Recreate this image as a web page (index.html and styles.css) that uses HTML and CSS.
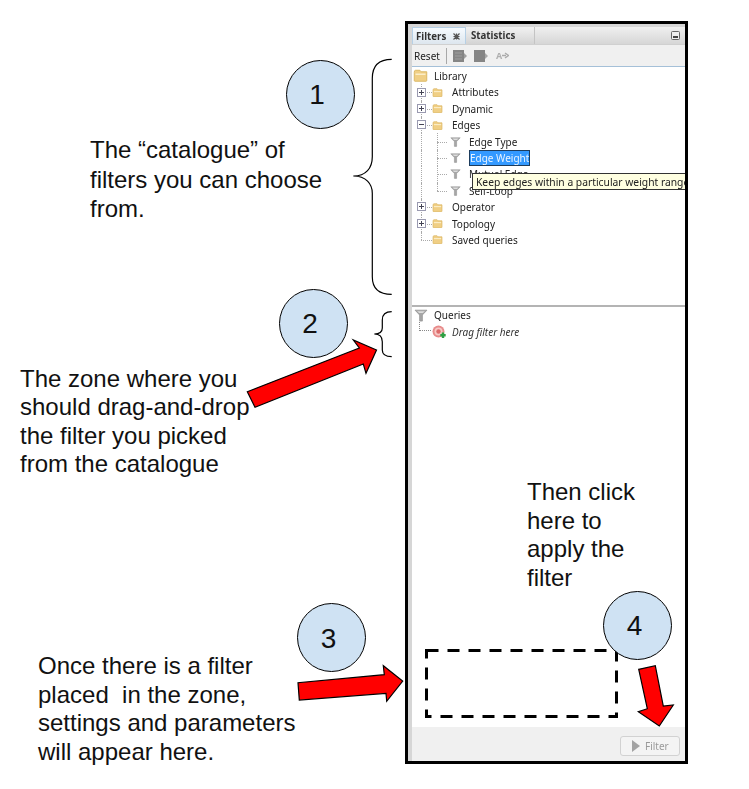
FILE: index.html
```html
<!DOCTYPE html>
<html lang="en">
<head>
<meta charset="utf-8">
<title>Filters panel</title>
<link rel="stylesheet" href="styles.css">
</head>
<body>
<svg class="defs" width="0" height="0" aria-hidden="true">
  <symbol id="folder" viewBox="0 0 12 10">
    <path d="M1 2.5 L1 9 Q1 9.6 1.6 9.6 L10.4 9.6 Q11 9.6 11 9 L11 2 L6.5 2 L5.5 .8 L2 .8 Q1 .8 1 2.5Z" fill="#f0cf85" stroke="#d8b35c" stroke-width=".7"/>
    <rect x="2" y="3.4" width="8" height="1.2" fill="#fbeec8"/>
  </symbol>
  <symbol id="funnel" viewBox="0 0 11 10">
    <path d="M.8 .8 H10.2 L6.6 4.6 V9.4 H4.4 V4.6Z" fill="#a6a6a6" stroke="#8c8c8c" stroke-width=".5"/>
    <path d="M2.5 1.6 H8.5 L7 3 H4Z" fill="#dcdcdc"/>
  </symbol>
</svg>
<main class="canvas">
  <section class="panel">
    <div class="panel-inner">
      <div class="tabs">
        <div class="tab tab-active">Filters
          <svg class="tab-close" width="7" height="7" viewBox="0 0 7 7"><path d="M.5 .5 L6.5 6.5 M6.5 .5 L.5 6.5 M.5 3.5 H6.5 M3.5 .5 V6.5" stroke="#555" stroke-width="1.2"/></svg>
        </div>
        <div class="tab">Statistics</div>
        <div class="tab-fill">
          <svg width="9" height="9" viewBox="0 0 9 9"><rect x=".5" y=".5" width="8" height="8" rx="1" fill="#eee" stroke="#666"/><rect x="2" y="5" width="5" height="2" fill="#444"/></svg>
        </div>
      </div>
      <div class="toolbar">
        <span class="reset">Reset</span>
        <span class="tool-sep"></span>
        <svg width="14" height="12" viewBox="0 0 14 12"><rect x="0" y="0" width="11" height="12" fill="#858585"/><path d="M11 3 L14 6 L11 9Z" fill="#a0a0a0"/><path d="M2 3 H9 M2 6 H9 M2 9 H9" stroke="#9e9e9e"/></svg>
        <svg class="tool-second" width="14" height="12" viewBox="0 0 14 12"><rect x="0" y="0" width="11" height="12" fill="#858585"/><path d="M11 3 L14 6 L11 9Z" fill="#a8a8a8"/></svg>
        <span class="tool-aa">A<svg width="7" height="7" viewBox="0 0 7 7"><path d="M0 3.5 H4 M3 1 L6.5 3.5 L3 6" stroke="#aaa" stroke-width="1.4" fill="none"/></svg></span>
      </div>
      <div class="tree">
        <div class="row row-root"><svg class="ic-root"><use href="#folder"/></svg><span>Library</span></div>
        <div class="row"><span class="stem"><i class="exp plus"></i></span><svg class="ic-folder"><use href="#folder"/></svg><span>Attributes</span></div>
        <div class="row"><span class="stem"><i class="exp plus"></i></span><svg class="ic-folder"><use href="#folder"/></svg><span>Dynamic</span></div>
        <div class="row"><span class="stem"><i class="exp"></i></span><svg class="ic-folder"><use href="#folder"/></svg><span>Edges</span></div>
        <div class="row"><span class="guide"></span><span class="stem2"></span><svg class="ic-funnel"><use href="#funnel"/></svg><span>Edge Type</span></div>
        <div class="row"><span class="guide"></span><span class="stem2"></span><svg class="ic-funnel"><use href="#funnel"/></svg><span class="selected">Edge Weight</span></div>
        <div class="row"><span class="guide"></span><span class="stem2"></span><svg class="ic-funnel"><use href="#funnel"/></svg><span>Mutual Edge</span></div>
        <div class="row"><span class="guide"></span><span class="stem2 stem-last"></span><svg class="ic-funnel"><use href="#funnel"/></svg><span>Self-Loop</span></div>
        <div class="row"><span class="stem"><i class="exp plus"></i></span><svg class="ic-folder"><use href="#folder"/></svg><span>Operator</span></div>
        <div class="row"><span class="stem"><i class="exp plus"></i></span><svg class="ic-folder"><use href="#folder"/></svg><span>Topology</span></div>
        <div class="row"><span class="stem stem-last"></span><svg class="ic-folder"><use href="#folder"/></svg><span>Saved queries</span></div>
        <div class="tooltip">Keep edges within a particular weight range</div>
      </div>
      <div class="queries">
        <div class="q-row"><svg class="ic-q"><use href="#funnel"/></svg><span>Queries</span></div>
        <div class="q-row q-drop">
          <span class="q-stem"></span>
          <svg class="ic-target" width="14" height="14" viewBox="0 0 14 14"><circle cx="6.5" cy="6.5" r="6" fill="#e88b8b"/><circle cx="6.5" cy="6.5" r="4" fill="#f6c9c5"/><circle cx="6.5" cy="6.5" r="2.2" fill="#dd6b6b"/><path d="M11 7.5 V13 M8.3 10.3 H13.7" stroke="#2ea043" stroke-width="2.4"/></svg>
          <em>Drag filter here</em>
        </div>
      </div>
      <div class="actions">
        <div class="filter-btn"><svg width="8" height="12" viewBox="0 0 8 12"><path d="M0 0 L8 6 L0 12Z" fill="#a3a3a3"/></svg><span>Filter</span></div>
      </div>
    </div>
  </section>

  <svg class="marks" width="749" height="789" viewBox="0 0 749 789" aria-hidden="true">
    <path class="brace" d="M391.7 59.3 C378 59.3 372.3 66 372.3 78.3 V156.7 C372.3 168 366 176 353.3 176 C366 176 372.3 184 372.3 193.3 V276.7 C372.3 288 378 294.3 391.7 294.3"/>
    <path class="brace" d="M391.7 311.7 C385 311.7 382.3 315 382.3 320 V328 C382.3 332 379 334 374.3 334 C379 334 382.3 336 382.3 341.7 V350 C382.3 354 385 356.7 391.7 356.7"/>
    <polygon class="arrow" points="247.3,391.7 255,407.3 363.3,364 366,373.3 376.5,350 353.3,340 359.3,348"/>
    <polygon class="arrow" points="298,682.7 299.3,700 386,693.3 386.7,701.3 402.7,681 383.3,665.7 384.3,674.7"/>
    <polygon class="arrow" points="638.7,669.3 655.3,665.7 663.3,706 673.3,705 659.3,726 638.3,711.7 647.3,708.7"/>
    <rect class="dash" x="426.5" y="650.5" width="190" height="66"/>
  </svg>

  <div class="num num-1">1</div>
  <div class="num num-2">2</div>
  <div class="num num-3">3</div>
  <div class="num num-4">4</div>

  <p class="note note-1">The “catalogue” of<br>filters you can choose<br>from.</p>
  <p class="note note-2">The zone where you<br>should drag-and-drop<br>the filter you picked<br>from the catalogue</p>
  <p class="note note-3">Then click<br>here to<br>apply the<br>filter</p>
  <p class="note note-4">Once there is a filter<br>placed&nbsp; in the zone,<br>settings and parameters<br>will appear here.</p>
</main>
</body>
</html>
```
FILE: styles.css
```css
* { box-sizing: border-box; }
html, body { margin: 0; background: #fff; }
.defs { position: absolute; }
.canvas { position: relative; width: 749px; height: 789px; overflow: hidden; font-family: "Liberation Sans", Arial, sans-serif; color: #000; }

/* panel */
.panel { position: absolute; left: 405px; top: 21px; width: 283px; height: 743px; border: 3px solid #000; background: #d6d6d6; padding: 3px 0 0 4px; }
.panel-inner { display: flex; flex-direction: column; height: 100%; background: #fff; font-family: "Noto Sans", sans-serif; font-size: 10px; color: #222; filter: blur(.35px); }

.tabs { display: flex; height: 17px; flex: none; background: #e4e4e4; font-weight: 700; font-size: 9.7px; color: #333; }
.tab { display: flex; align-items: center; gap: 6px; padding: 0 0 0 5px; width: 69px; border-right: 1px solid #c4c4c4; background: linear-gradient(#f2f2f2, #d4d4d4); }
.tab-active { width: 54px; background: linear-gradient(#f6fbff, #dde6ee); border: 1px solid #b6d0e6; border-bottom: 0; padding-left: 3px; }
.tab-close { flex: none; margin-left: 1px; }
.tab-fill { flex: 1; display: flex; align-items: center; justify-content: flex-end; padding-right: 5px; background: linear-gradient(#f0f0f0, #d6d6d6); }

.toolbar { display: flex; align-items: center; gap: 6px; height: 23px; flex: none; padding-left: 2px; background: #f0f0f0; border-bottom: 1px solid #a5c0d8; border-top: 1px solid #d0d0d0; }
.reset { color: #222; }
.tool-sep { width: 1px; height: 16px; background: #a8a8a8; margin: 0 0 0 0; }
.tool-second { margin-left: 1px; }
.tool-aa { display: flex; align-items: center; color: #b0b0b0; margin-left: 2px; font-weight: 700; font-size: 9px; }

.tree { position: relative; flex: none; height: 240px; overflow: hidden; padding-top: .8px; border-bottom: 2px solid #b4b4b4; }
.row { display: flex; align-items: center; height: 16.4px; white-space: nowrap; }
.row-root { padding-left: 1px; }
.ic-root { width: 15px; height: 13px; margin-right: 6px; flex: none; }
.ic-folder { width: 11px; height: 9px; margin-right: 9px; flex: none; }
.ic-funnel { width: 11px; height: 10px; margin-right: 8px; flex: none; }

.stem, .guide { position: relative; flex: none; width: 20px; height: 100%; }
.stem2 { position: relative; flex: none; width: 18px; height: 100%; }
.stem::before, .guide::before { content: ""; position: absolute; left: 9px; top: 0; bottom: 0; border-left: 1px dotted #aaa; }
.stem::after { content: ""; position: absolute; left: 9px; right: 0; top: 50%; border-top: 1px dotted #aaa; }
.stem2::before { content: ""; position: absolute; left: 5px; top: 0; bottom: 0; border-left: 1px dotted #aaa; }
.stem2::after { content: ""; position: absolute; left: 5px; right: 3px; top: 50%; border-top: 1px dotted #aaa; }
.stem-last::before { bottom: 50%; }
.exp { position: absolute; left: 5px; top: 3.5px; width: 9px; height: 9px; border: 1px solid #9a9ab0; background: #fff; z-index: 1; }
.exp::before { content: ""; position: absolute; left: 1px; right: 1px; top: 3px; height: 1px; background: #445; }
.plus::after { content: ""; position: absolute; top: 1px; bottom: 1px; left: 3px; width: 1px; background: #445; }

.selected { background: #3399ff; color: #eaf4ff; outline: 1px solid #1d3c5c; outline-offset: -1px; padding: 2px 1px; line-height: 12px; }
.tooltip { position: absolute; left: 60px; top: 106px; width: 240px; height: 17px; padding: 0 3px; line-height: 16px; font-size: 10.3px; white-space: nowrap; color: #222; background: #ffffe1; border: 1px solid #333; }

.queries { flex: 1; padding-top: 0; }
.q-row { display: flex; align-items: center; height: 16.4px; white-space: nowrap; }
.ic-q { width: 14px; height: 15px; margin: 0 6px 0 2px; flex: none; }
.q-drop { position: relative; padding-left: 20px; }
.q-stem { position: absolute; left: 7px; top: -1px; width: 12px; height: 9px; border-left: 1px dotted #888; border-bottom: 1px dotted #888; }
.ic-target { flex: none; margin-right: 6px; }
.q-drop em { color: #333; }

.actions { flex: none; height: 34px; display: flex; align-items: center; justify-content: flex-end; padding: 3px 5px 0 0; background: #f0f0f0; }
.filter-btn { display: flex; align-items: center; gap: 5px; width: 60px; height: 20px; padding-left: 11px; border: 1px solid #d2d2d2; border-radius: 3px; background: #f4f4f4; color: #9a9a9a; }

/* annotation layer */
.marks { position: absolute; left: 0; top: 0; }
.brace { fill: none; stroke: #000; stroke-width: 1.2; }
.arrow { fill: #f00; stroke: #000; stroke-width: 1.2; }
.dash { fill: none; stroke: #000; stroke-width: 3; stroke-dasharray: 12 9; }

.num { position: absolute; width: 69px; height: 69px; padding: 2px 6px 0 0; display: flex; align-items: center; justify-content: center; border: 1.5px solid #000; border-radius: 50%; background: #cfe2f3; font-size: 28px; color: #111; }
.num-1 { left: 285.5px; top: 59.5px; }
.num-2 { left: 278.5px; top: 288.5px; }
.num-3 { left: 297px; top: 603px; }
.num-4 { left: 603px; top: 590.5px; }

.note { position: absolute; margin: 0; font-size: 24px; white-space: nowrap; color: #111; }
.note-1 { left: 90px; top: 135px; line-height: 29.6px; }
.note-2 { left: 20px; top: 364.5px; line-height: 28.5px; }
.note-3 { left: 527px; top: 478px; line-height: 28.7px; }
.note-4 { left: 38px; top: 652px; line-height: 28.7px; }
```
